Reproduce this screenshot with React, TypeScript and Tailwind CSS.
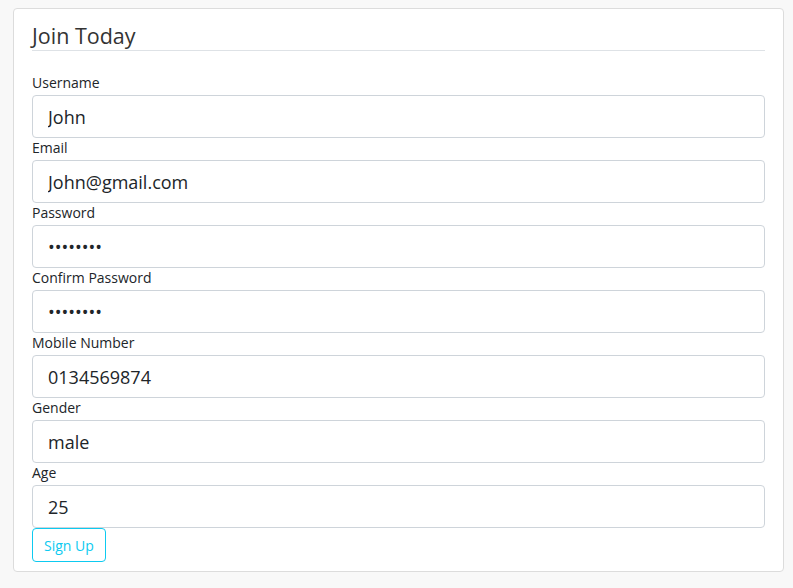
import React from 'react';

const fields: { label: string; value: string; type?: string }[] = [
  { label: 'Username', value: 'John' },
  { label: 'Email', value: 'John@gmail.com' },
  { label: 'Password', value: 'password', type: 'password' },
  { label: 'Confirm Password', value: 'password', type: 'password' },
  { label: 'Mobile Number', value: '0134569874' },
  { label: 'Gender', value: 'male' },
  { label: 'Age', value: '25' },
];

export default function App() {
  return (
    <div
      className="min-h-[588px] bg-[#f8f8f8] pt-2 pl-[13px] pr-[9px] text-[#212529]"
      style={{ fontFamily: '"Open Sans", "Noto Sans", sans-serif' }}
    >
      <div className="rounded-[4px] border border-[#dcdcdc] bg-white px-[18px] pt-[12px] pb-[9px]">
        <h1 className="h-[30px] border-b border-[#dee2e6] text-[21.5px] leading-[29px] text-[#333]">
          Join Today
        </h1>
        <form className="mt-[22px] flex flex-col" onSubmit={(e) => e.preventDefault()}>
          {fields.map((f) => (
            <div key={f.label} className="flex flex-col">
              <label className="h-[22px] text-[14px] leading-[20px]">{f.label}</label>
              <input
                readOnly
                type={f.type || 'text'}
                value={f.value}
                className="h-[43px] rounded-[4px] border border-[#ced4da] bg-white px-[15px] text-[18px] text-[#212529] outline-none"
              />
            </div>
          ))}
          <div>
            <button
              type="submit"
              className="h-[34px] rounded-[4px] border border-[#0dcaf0] px-[11px] text-[14px] text-[#0dcaf0]"
            >
              Sign Up
            </button>
          </div>
        </form>
      </div>
    </div>
  );
}
